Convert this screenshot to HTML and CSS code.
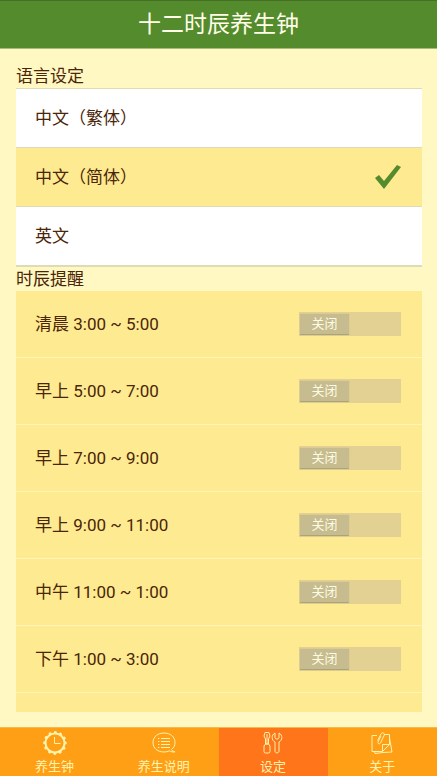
FILE: index.html
```html
<!DOCTYPE html>
<html lang="zh-CN">
<head>
<meta charset="utf-8">
<meta name="viewport" content="width=device-width, initial-scale=1">
<title>十二时辰养生钟</title>
<link rel="stylesheet" href="styles.css">
</head>
<body>
<header class="header"><h1 class="header-title">十二时辰养生钟</h1></header>

<main class="settings">
  <h2 class="section-title" id="language-title">语言设定</h2>
  <div class="languages" role="radiogroup" aria-labelledby="language-title">
    <label class="row language">
      <span class="name">中文（繁体）</span>
      <span class="choice"><input type="radio" name="language">
        <svg class="check" viewBox="0 0 26 26"><path d="M0 14l4-3 5 6L22 1l4 2L9 25z"/></svg></span>
    </label>
    <label class="row language">
      <span class="name">中文（简体）</span>
      <span class="choice"><input type="radio" name="language" checked>
        <svg class="check" viewBox="0 0 26 26"><path d="M0 14l4-3 5 6L22 1l4 2L9 25z"/></svg></span>
    </label>
    <label class="row language">
      <span class="name">英文</span>
      <span class="choice"><input type="radio" name="language">
        <svg class="check" viewBox="0 0 26 26"><path d="M0 14l4-3 5 6L22 1l4 2L9 25z"/></svg></span>
    </label>
  </div>

  <h2 class="section-title">时辰提醒</h2>
  <div class="reminders">
    <label class="row reminder"><span class="name">清晨 3:00 ~ 5:00</span><span class="switch"><input type="checkbox"><span class="thumb">关闭</span></span></label>
    <label class="row reminder"><span class="name">早上 5:00 ~ 7:00</span><span class="switch"><input type="checkbox"><span class="thumb">关闭</span></span></label>
    <label class="row reminder"><span class="name">早上 7:00 ~ 9:00</span><span class="switch"><input type="checkbox"><span class="thumb">关闭</span></span></label>
    <label class="row reminder"><span class="name">早上 9:00 ~ 11:00</span><span class="switch"><input type="checkbox"><span class="thumb">关闭</span></span></label>
    <label class="row reminder"><span class="name">中午 11:00 ~ 1:00</span><span class="switch"><input type="checkbox"><span class="thumb">关闭</span></span></label>
    <label class="row reminder"><span class="name">下午 1:00 ~ 3:00</span><span class="switch"><input type="checkbox"><span class="thumb">关闭</span></span></label>
  </div>
</main>

<nav class="tabs">
  <a class="tab" href="#clock">
    <svg class="icon" viewBox="0 0 24 24">
      <circle cx="12" cy="12" r="9.5" stroke-width="2"/>
      <circle cx="12" cy="12" r="10.4" stroke-width="3" stroke-linecap="round" stroke-dasharray="0.1 5.345"/>
      <path d="M11.500 6v6.500h6" stroke-width="1"/>
    </svg>
    <span>养生钟</span>
  </a>
  <a class="tab" href="#guide">
    <svg class="icon" viewBox="0 0 24 24">
      <path d="M19.5 18.5C22 16.700 23 14.300 23 11.500 23 5.500 18 2 12 2S1 5.500 1 11.500 6 21 12 21c2 0 3.800-.4 5.400-1.200 1.600 1 3.600 1.500 5.600 1-1.700-.2-2.800-1-3.500-2.300z"/>
      <path d="M9 7.500h9M9 10.500h9M9 13.500h9M9 16.500h9M6 7.500h1.300M6 10.500h1.300M6 13.500h1.300M6 16.500h1.300"/>
    </svg>
    <span>养生说明</span>
  </a>
  <a class="tab tab-active" href="#settings" aria-current="page">
    <svg class="icon" viewBox="0 0 24 24">
      <path d="M4 1.500h4l1 3.500-1.500 3v5h-3V8L3 5z"/>
      <path d="M4.500 13h3L9 15v5.500q0 1.500-1.500 1.500h-3Q3 22 3 20.500V15zM6 3v10"/>
      <path d="M14 2C10 4 10.500 9.500 14 11v9c0 2.500 4 2.500 4 0v-9c3.500-1.500 4-7 0-9v4.500L17 8h-2l-1-1.500z"/>
    </svg>
    <span>设定</span>
  </a>
  <a class="tab" href="#about">
    <svg class="icon" viewBox="0 0 24 24">
      <path d="M7 4.500H2v16h10.500M14 3.500h5.500v10l-7 7v-7h7"/>
      <path d="M19.500 7L22 21l-9 .5M4.500 20.500l.5 2 8-1"/>
      <path d="M7.500 9.500L11 3c1.200-2.200 4.200-.8 3.200 1.300L10.500 12c-.9 1.600-3.200.6-2.400-1.200L11 5"/>
    </svg>
    <span>关于</span>
  </a>
</nav>
</body>
</html>
```
FILE: styles.css
```css
* {
  box-sizing: border-box;
}

body {
  display: flex;
  flex-direction: column;
  height: 100vh;
  margin: 0;
  background: #fff8c2;
  color: #4a2508;
  font-family: Roboto, "Noto Sans CJK SC", sans-serif;
  font-size: 17px;
}

.header {
  display: flex;
  flex: none;
  align-items: center;
  justify-content: center;
  height: 49px;
  border-top: 1px solid #456f27;
  border-bottom: 1px solid #a5bd78;
  background: #548b2d;
}

.header-title {
  margin: 0;
  color: #fffee8;
  font-size: 23px;
  font-weight: 400;
  line-height: 32px;
}

.settings {
  display: flex;
  flex: 1;
  flex-direction: column;
  min-height: 0;
  padding: 15px 15px 15px 16px;
}

.section-title {
  flex: none;
  margin: 0;
  font-size: 17px;
  font-weight: 400;
  line-height: 24px;
}

.row {
  display: flex;
  align-items: center;
  justify-content: space-between;
  padding: 0 21px 0 19px;
}

.name {
  padding-bottom: 3px;
}

.languages {
  flex: none;
  border-top: 1px solid #dddcb5;
  border-bottom: 1px solid #dddcb5;
}

.language {
  height: 59px;
  border-bottom: 1px solid #dddcb5;
  background: #fff;
}

.language:has(input:checked) {
  background: #feea90;
}

.choice,
.switch {
  display: grid;
}

.choice > *,
.switch > * {
  grid-area: 1 / 1;
}

.choice input,
.switch input {
  margin: 0;
  appearance: none;
}

.check {
  width: 26px;
  height: 26px;
  fill: #548b2d;
  visibility: hidden;
}

.choice input:checked + .check {
  visibility: visible;
}

.reminders {
  flex: 1;
  min-height: 0;
  overflow: hidden;
  background: #feea90;
}

.reminder {
  height: 67px;
  border-bottom: 1px solid #fff4b5;
}

.switch {
  align-items: center;
  width: 102px;
  height: 24px;
}

.switch input {
  width: 100%;
  height: 100%;
  background: #e2d193;
}

.thumb {
  width: 49px;
  height: 21px;
  margin-left: 1px;
  border-bottom: 1px solid #aba477;
  border-radius: 1px;
  background: #c6bc90;
  box-shadow: 0 0 1px #a9a174;
  color: #fffbe0;
  font-size: 13px;
  line-height: 20px;
  text-align: center;
}

.tabs {
  display: flex;
  flex: none;
  height: 49px;
  border-top: 1px solid #f3b94a;
  background: #ff9f16;
}

.tab {
  display: flex;
  flex: 1;
  flex-direction: column;
  align-items: center;
  padding-top: 3px;
  color: #fff3ad;
  font-size: 13px;
  line-height: 24px;
  text-decoration: none;
}

.tab-active {
  background: #ff751a;
}

.icon {
  flex: none;
  width: 24px;
  height: 24px;
  overflow: visible;
  fill: none;
  stroke: currentColor;
  stroke-width: 1;
  stroke-linejoin: round;
}
```
